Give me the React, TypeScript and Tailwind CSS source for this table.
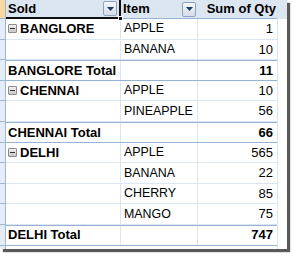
const FONT = { fontFamily: '"Liberation Sans", Arial, sans-serif' }

type Row =
  | { kind: 'item'; city?: string; item: string; qty: number }
  | { kind: 'total'; city: string; qty: number }

const ROWS: Row[] = [
  { kind: 'item', city: 'BANGLORE', item: 'APPLE', qty: 1 },
  { kind: 'item', item: 'BANANA', qty: 10 },
  { kind: 'total', city: 'BANGLORE', qty: 11 },
  { kind: 'item', city: 'CHENNAI', item: 'APPLE', qty: 10 },
  { kind: 'item', item: 'PINEAPPLE', qty: 56 },
  { kind: 'total', city: 'CHENNAI', qty: 66 },
  { kind: 'item', city: 'DELHI', item: 'APPLE', qty: 565 },
  { kind: 'item', item: 'BANANA', qty: 22 },
  { kind: 'item', item: 'CHERRY', qty: 85 },
  { kind: 'item', item: 'MANGO', qty: 75 },
  { kind: 'total', city: 'DELHI', qty: 747 },
]

function DropButton() {
  return (
    <div className="w-[14px] h-[15px] border border-[#8ea3c0] rounded-[2px] bg-gradient-to-b from-[#f4f7fb] to-[#d5dde8] flex items-center justify-center">
      <svg width="7" height="4" viewBox="0 0 7 4">
        <path d="M0 0h7L3.5 4z" fill="#1f3a66" />
      </svg>
    </div>
  )
}

function Collapse() {
  return (
    <span className="w-[9px] h-[9px] border border-[#8c8c8c] rounded-[1px] bg-gradient-to-b from-[#f0f0f0] to-[#c8c8c8] flex items-center justify-center mr-[3px]">
      <span className="w-[5px] h-[1px] bg-[#333]" />
    </span>
  )
}

export default function App() {
  return (
    <div className="w-[294px] h-[256px] bg-white overflow-hidden text-[13px] text-black" style={FONT}>
      <div className="flex w-[287px] shadow-[3px_3px_1px_rgba(60,60,60,0.85)]">
        {/* row headers strip */}
        <div className="w-[6px] flex flex-col bg-[#e4ecf7] border-r border-[#9eb6ce]">
          <div className="h-[19px] bg-[#f9d99f] border-b border-[#9eb6ce]" />
          {ROWS.map((_, i) => (
            <div key={i} className="h-[20.6px] border-b border-[#9eb6ce]" />
          ))}
        </div>

        <div className="w-[271px] flex flex-col">
          {/* header */}
          <div className="flex h-[19px] bg-[#dce6f1] font-bold">
            <div className="w-[115px] flex items-center justify-between pl-[2px] pr-[2px] border-b-2 border-r-2 border-[#111] relative">
              <span>Sold</span>
              <DropButton />
              <span className="absolute right-[-4px] bottom-[-4px] w-[5px] h-[5px] bg-[#111] border border-white" />
            </div>
            <div className="w-[77px] flex items-center justify-between pl-[2px] pr-[2px] border-b border-[#95b3d7]">
              <span>Item</span>
              <DropButton />
            </div>
            <div className="w-[79px] flex items-center justify-end pr-[1px] border-b border-[#95b3d7]">
              <span>Sum of Qty</span>
            </div>
          </div>

          {ROWS.map((r, i) =>
            r.kind === 'item' ? (
              <div key={i} className="flex h-[20.6px] border-b border-[#dce6f1]">
                <div className="w-[115px] flex items-center pl-[2px] font-bold border-r border-[#dce6f1]">
                  {r.city && (
                    <>
                      <Collapse />
                      {r.city}
                    </>
                  )}
                </div>
                <div className="w-[77px] flex items-center pl-[3px] text-[12.4px] border-r border-[#dce6f1]">{r.item}</div>
                <div className="w-[79px] flex items-center justify-end pr-[4px]">{r.qty}</div>
              </div>
            ) : (
              <div key={i} className="flex h-[20.6px] font-bold border-t border-b border-[#95b3d7]">
                <div className="w-[115px] flex items-center pl-[2px] border-r border-[#dce6f1]">{r.city} Total</div>
                <div className="w-[77px] border-r border-[#dce6f1]" />
                <div className="w-[79px] flex items-center justify-end pr-[4px]">{r.qty}</div>
              </div>
            )
          )}
          <div className="h-[3px]" />
        </div>

        {/* next column */}
        <div className="w-[10px] flex flex-col border-l border-[#dce6f1]">
          <div className="h-[19px] bg-[#dce6f1]" />
        </div>
      </div>
    </div>
  )
}
